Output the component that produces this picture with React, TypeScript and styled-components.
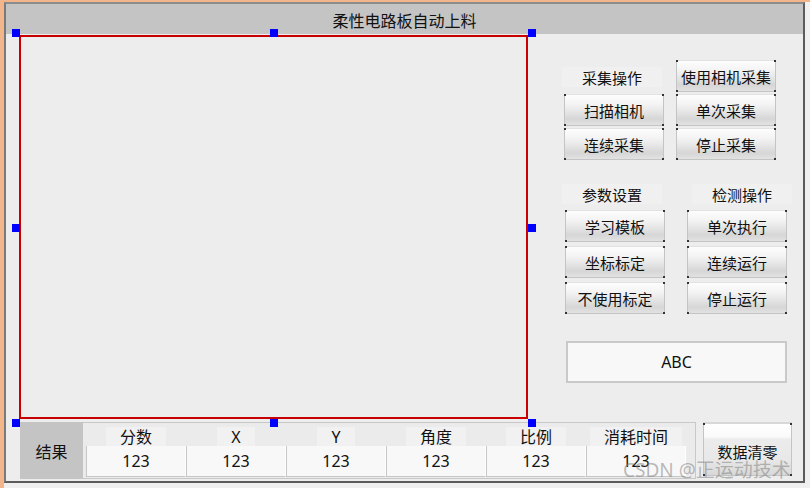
import React from "react";
import styled, { createGlobalStyle } from "styled-components";

const Global = createGlobalStyle`
  html, body { margin: 0; padding: 0; }
  body { background: #f0f0f0; font-family: "Noto Sans CJK SC", "Noto Sans", sans-serif; }
`;

const Page = styled.div`
  position: relative;
  width: 810px;
  height: 488px;
  box-sizing: border-box;
  background: #f0f0f0;
  border-top: 2px solid #f3b68b;
  border-left: 4px solid #f3b68b;
  overflow: hidden;
`;

const Window = styled.div`
  width: 801px;
  height: 481px;
  box-sizing: border-box;
  border-left: 2px solid #7a7a7a;
  border-top: 2px solid #8c8c8c;
  border-right: 2px solid #5c5c5c;
  border-bottom: 2px solid #5c5c5c;
  background: #ededed;
  display: flex;
  flex-direction: column;
`;

const TitleBar = styled.div`
  height: 30px;
  background: #c4c4c4;
  display: flex;
  align-items: center;
  justify-content: center;
  font-size: 16px;
  color: #111;
  padding-top: 1px;
  box-sizing: border-box;
`;

const TopRow = styled.div`
  display: flex;
  height: 385px;
`;

const CanvasWrap = styled.div`
  position: relative;
  margin: 1px 0 0 13px;
  width: 509px;
  height: 384px;
`;

const Canvas = styled.div`
  width: 100%;
  height: 100%;
  box-sizing: border-box;
  border: 2px solid #c80000;
  background: #ededed;
`;

const Handle = styled.div<{ $x: number; $y: number }>`
  position: absolute;
  left: ${(p) => p.$x}px;
  top: ${(p) => p.$y}px;
  width: 8px;
  height: 8px;
  background: #0000ff;
`;

const Panel = styled.div`
  margin-left: 34px;
  padding-top: 26px;
  display: flex;
  flex-direction: column;
`;

const Group1 = styled.div`
  display: grid;
  grid-template-columns: 102px 100px;
  grid-auto-rows: 32px;
  column-gap: 12px;
  row-gap: 2px;
  & > :first-child { margin-bottom: 5px; }
`;

const Group2 = styled.div`
  margin: 24px 0 0 3px;
  display: grid;
  grid-template-columns: 100px 100px;
  grid-template-rows: 22px 32px 32px 32px;
  column-gap: 22px;
  row-gap: 4px;
  & > :nth-child(-n + 2) { margin-bottom: 2px; }
`;

const Label = styled.div<{ $shift?: number }>`
  align-self: end;
  justify-self: start;
  width: 100px;
  height: 20px;
  background: #f0f0f0;
  display: flex;
  align-items: center;
  justify-content: center;
  font-size: 15px;
  color: #111;
  transform: translateX(${(p) => p.$shift ?? 0}px);
`;

const Button = styled.div`
  position: relative;
  justify-self: end;
  width: 100px;
  height: 32px;
  box-sizing: border-box;
  border: 1px solid #c4c4c4;
  border-top-color: #e2e2e2;
  background: linear-gradient(#fdfdfd 0%, #f4f4f4 30%, #e6e6e6 55%, #d6d6d6 80%, #e2e2e2 100%);
  display: flex;
  align-items: center;
  justify-content: center;
  font-size: 15px;
  color: #111;
  white-space: nowrap;
  &::before, &::after {
    content: "";
    position: absolute;
    top: -1px;
    bottom: -1px;
    width: 2px;
    background: linear-gradient(#333 0 2px, transparent 2px calc(100% - 2px), #333 calc(100% - 2px));
  }
  &::before { left: -1px; }
  &::after { right: -1px; }
`;

const AbcBox = styled.div`
  margin: 27px 0 0 4px;
  width: 221px;
  height: 42px;
  box-sizing: border-box;
  border: 2px solid #c9c9c9;
  background: #f8f8f8;
  display: flex;
  align-items: center;
  justify-content: center;
  font-family: "Noto Sans", sans-serif;
  font-size: 16px;
  color: #111;
`;

const BottomRow = styled.div`
  display: flex;
  margin: 3px 0 0 14px;
  height: 57px;
`;

const ResultTag = styled.div`
  width: 63px;
  background: #c4c4c4;
  display: flex;
  align-items: center;
  justify-content: center;
  font-size: 16px;
  color: #111;
`;

const Table = styled.div`
  width: 613px;
  box-sizing: border-box;
  border: 1px solid #c8c8c8;
  border-left: none;
  background: #ebebeb;
  padding: 4px 0 0 3px;
  display: grid;
  grid-template-columns: repeat(6, 100px);
  grid-template-rows: 19px 31px;
`;

const HeadCell = styled.div`
  display: flex;
  justify-content: center;
  align-items: center;
`;

const HeadText = styled.span`
  background: #f1f1f1;
  padding: 0 14px;
  height: 19px;
  line-height: 20px;
  font-family: "Noto Sans", "Noto Sans CJK SC", sans-serif;
  font-size: 16px;
  color: #111;
`;

const ValueCell = styled.div`
  box-sizing: border-box;
  background: #f8f8f8;
  border-left: 1px solid #c6c6c6;
  border-right: 1px solid #ffffff;
  border-bottom: 1px solid #c6c6c6;
  display: flex;
  align-items: center;
  justify-content: center;
  font-family: "Noto Sans", sans-serif;
  font-size: 16px;
  color: #111;
`;

const ClearButton = styled(Button)`
  margin-left: 7px;
  width: 89px;
  height: 54px;
  padding-top: 4px;
  border-top: 2px solid #d8d8d8;
  background: linear-gradient(#ffffff 0%, #fafafa 25%, #ececec 30%, #e8e8e8 70%, #d8d8d8 100%);
`;

const Watermark = styled.div`
  position: absolute;
  left: 619px;
  top: 453px;
  font-family: "Noto Sans", "Noto Sans CJK SC", sans-serif;
  font-size: 19px;
  color: rgba(130, 130, 130, 0.55);
  white-space: nowrap;
  pointer-events: none;
`;

const handles: [number, number][] = [
  [-7, -6], [251, -6], [509, -6],
  [-7, 189], [509, 189],
  [-7, 384], [251, 384], [509, 384],
];

const headers = ["分数", "X", "Y", "角度", "比例", "消耗时间"];

export default function App() {
  return (
    <>
      <Global />
      <Page>
        <Window>
          <TitleBar>柔性电路板自动上料</TitleBar>
          <TopRow>
            <CanvasWrap>
              <Canvas />
              {handles.map(([x, y], i) => (
                <Handle key={i} $x={x} $y={y} />
              ))}
            </CanvasWrap>
            <Panel>
              <Group1>
                <Label>采集操作</Label>
                <Button>使用相机采集</Button>
                <Button>扫描相机</Button>
                <Button>单次采集</Button>
                <Button>连续采集</Button>
                <Button>停止采集</Button>
              </Group1>
              <Group2>
                <Label $shift={-3}>参数设置</Label>
                <Label $shift={5}>检测操作</Label>
                <Button>学习模板</Button>
                <Button>单次执行</Button>
                <Button>坐标标定</Button>
                <Button>连续运行</Button>
                <Button>不使用标定</Button>
                <Button>停止运行</Button>
              </Group2>
              <AbcBox>ABC</AbcBox>
            </Panel>
          </TopRow>
          <BottomRow>
            <ResultTag>结果</ResultTag>
            <Table>
              {headers.map((h) => (
                <HeadCell key={h}>
                  <HeadText>{h}</HeadText>
                </HeadCell>
              ))}
              {headers.map((h) => (
                <ValueCell key={h}>123</ValueCell>
              ))}
            </Table>
            <ClearButton>数据清零</ClearButton>
          </BottomRow>
        </Window>
        <Watermark>CSDN @正运动技术</Watermark>
      </Page>
    </>
  );
}
